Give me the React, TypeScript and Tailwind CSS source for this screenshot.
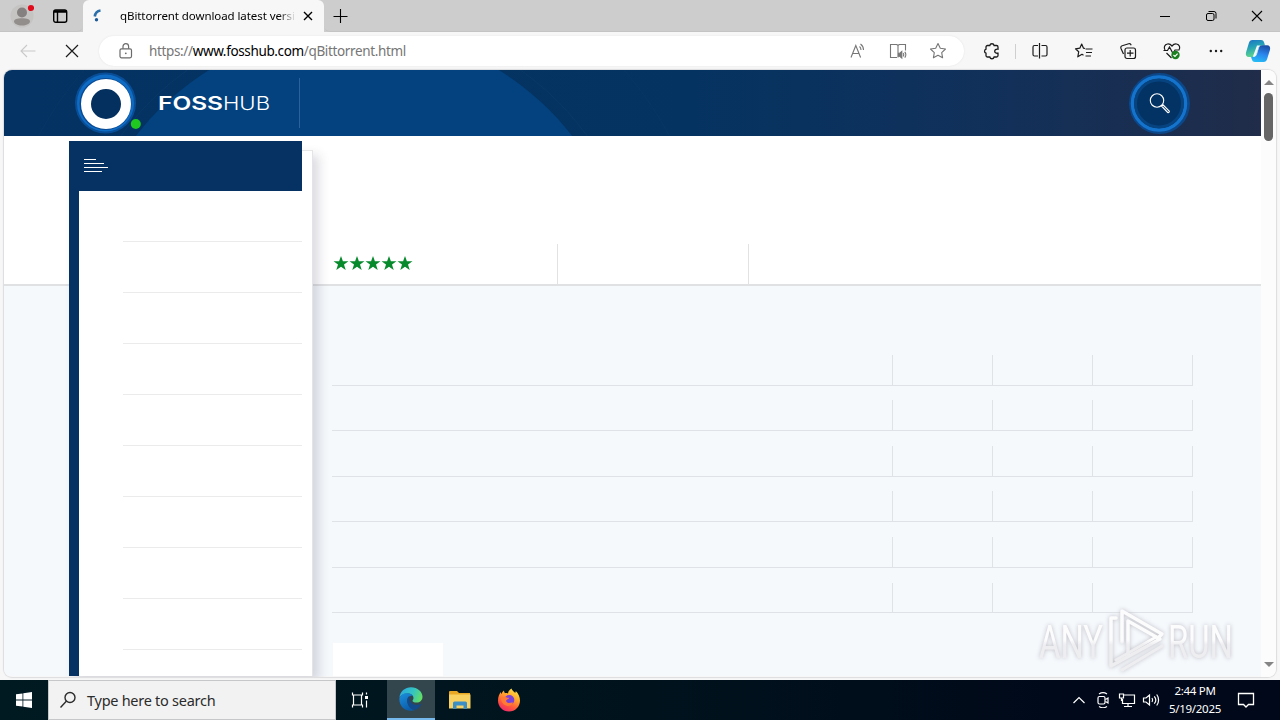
import React from 'react'

interface IconProps {
  size?: number
  className?: string
  stroke?: number
  children: React.ReactNode
}

function Icon({ size = 20, className = '', stroke = 1.1, children }: IconProps) {
  return (
    <svg
      width={size}
      height={size}
      viewBox={`0 0 ${size} ${size}`}
      fill="none"
      stroke="currentColor"
      strokeWidth={stroke}
      className={`shrink-0 ${className}`}
    >
      {children}
    </svg>
  )
}

const STAR = 'M10 2.5l2.3 4.8 5.2.7-3.8 3.6.9 5.2-4.6-2.5-4.6 2.5.9-5.2L2.500 8l5.200-.7z'

function TabStrip() {
  return (
    <div className="flex h-8 bg-[#cdcdcd] text-black">
      <div className="flex w-[83px] items-center rounded-br-md border-b border-[#c4c4c4]">
        <svg width="24" height="24" viewBox="0 0 24 24" className="ml-[10px] mt-px">
          <circle cx="12" cy="12" r="11.500" fill="#c6c4c3" />
          <circle cx="12" cy="8.500" r="5" fill="#858180" />
          <path d="M4 17.500c0-2.500 3-3.300 8-3.300s8 .8 8 3.300c0 2.200-3.500 4-8 4s-8-1.800-8-4z" fill="#918e8c" />
          <circle cx="21" cy="4" r="3.100" fill="#e00b1c" />
        </svg>
        <Icon size={16} stroke={1.4} className="ml-[18px]">
          <rect x="1.700" y="2" width="13" height="12.300" rx="2" />
          <path d="M2 3.500h12.500" strokeWidth="2.500" />
          <path d="M5.500 4v10" />
        </Icon>
      </div>
      <div className="flex w-[241px] items-center rounded-t-md bg-[#f7f7f7]">
        <svg width="14" height="14" viewBox="0 0 14 14" className="ml-[7px] shrink-0" fill="none">
          <path d="M10.500 1.500C7 2 5.200 4 4.800 7.500" stroke="#2a6faa" strokeWidth="2.600" />
          <circle cx="6.500" cy="10.700" r="1.700" fill="#1d5a96" />
        </svg>
        <div className="ml-4 w-[176px] whitespace-nowrap text-[11.5px] tracking-[-0.08px] [mask-image:linear-gradient(to_right,black_90%,transparent)]">
          qBittorrent download latest versi
        </div>
        <Icon size={12} stroke={1.4} className="ml-[6px]">
          <path d="M2 2l8 8M10 2l-8 8" />
        </Icon>
      </div>
      <div className="flex flex-1 items-center rounded-bl-md border-b border-[#c4c4c4]">
        <Icon size={16} stroke={1.1} className="ml-2">
          <path d="M8.500 1v14M1.500 8.500h14" />
        </Icon>
        <div className="ml-auto flex">
          <span className="flex w-[46px] justify-center">
            <Icon size={12} stroke={1}><path d="M1 6.500h10" /></Icon>
          </span>
          <span className="flex w-[46px] justify-center">
            <Icon size={12} stroke={1}>
              <rect x="1.500" y="3.500" width="7.500" height="7" rx="1.500" />
              <path d="M3.500 1.500h5.500a2 2 0 0 1 2 2v5" />
            </Icon>
          </span>
          <span className="flex w-[46px] justify-center">
            <Icon size={12} stroke={1.1}><path d="M1 1l10 10M11 1L1 11" /></Icon>
          </span>
        </div>
      </div>
    </div>
  )
}

function Copilot() {
  return (
    <svg width="26" height="24" viewBox="0 0 26 24">
      <defs>
        <linearGradient id="cpA" x1="0" y1="0" x2="0.3" y2="1">
          <stop offset="0" stopColor="#1d6fc4" />
          <stop offset="0.45" stopColor="#23a0b8" />
          <stop offset="1" stopColor="#5fd68a" />
        </linearGradient>
        <linearGradient id="cpB" x1="0.6" y1="0" x2="0.3" y2="1">
          <stop offset="0" stopColor="#1b4fa8" />
          <stop offset="0.5" stopColor="#2b86ee" />
          <stop offset="1" stopColor="#25bdf5" />
        </linearGradient>
      </defs>
      <path d="M7.500 1h8.500c2 0 2.700 1.200 3.300 3l.7 2.500h-3c-2 0-3 1-3.600 3l-1.700 5.500c-.6 2-1.700 3-3.700 3H4c-2.500 0-3.700-2-3-4.500L3.800 4.200C4.500 2 5.500 1 7.500 1z" fill="url(#cpA)" />
      <path d="M18.500 23H10c-2 0-2.700-1.200-3.300-3L6 17.800h2.500c2 0 3-1 3.600-3l1.700-5.500c.6-2 1.700-3 3.700-3H22c2.500 0 3.700 2 3 4.500l-2.800 9c-.7 2.200-1.700 3.200-3.700 3.200z" fill="url(#cpB)" />
      <path d="M12 6.500h3.500c-1.300.6-1.800 1.600-2.300 3.200l-1.700 5.300c-.4 1.300-1 2.200-2 2.700H7.800z" fill="#f3faff" />
    </svg>
  )
}

function Toolbar() {
  return (
    <div className="flex h-[38px] items-center bg-[#f7f7f7] text-[#1b1b1b]">
      <Icon className="ml-[18px] text-[#c9c9c9]">
        <path d="M17.500 10H3M9 4l-6 6 6 6" />
      </Icon>
      <Icon size={16} stroke={1.2} className="ml-[26px]">
        <path d="M2 2l12 12M14 2L2 14" />
      </Icon>
      <div className="ml-[19px] flex h-[30px] w-[865px] items-center rounded-full bg-white shadow-[0_0_2px_#e2e2e2]">
        <Icon size={16} stroke={1.2} className="ml-[19px] text-[#6b6b6b]">
          <rect x="2" y="5.800" width="11.500" height="9" rx="1.500" />
          <path d="M5 5.800V3.500a2.800 2.800 0 0 1 5.600 0v2.300" />
          <circle cx="7.800" cy="10.300" r="0.900" fill="currentColor" stroke="none" />
        </Icon>
        <div className="ml-[15px] flex-1 whitespace-nowrap text-[13.5px] tracking-[-0.36px] text-[#767676]">
          https://<span className="text-black">www.fosshub.com</span>/qBittorrent.html
        </div>
        <div className="flex pr-[6px] text-[#767676]">
          <span className="flex w-10 justify-center">
            <Icon>
              <path d="M3 16.500L7.800 4.500l4.800 12M4.700 12.500h6.200" />
              <path d="M11.500 5.500c1 .8 1.500 2 1.500 3.500M12.500 3c2 1.500 3 3.500 3 6" />
            </Icon>
          </span>
          <span className="flex w-10 justify-center">
            <Icon>
              <path d="M10 4v12.500M9 16.500H2.500V3.500h6.300L10 4.500l1.200-1h6.300v6" />
              <path d="M10.500 12.200h1.300l2-1.700v6.500l-2-1.700h-1.300z" fill="currentColor" />
              <path d="M15.200 12c.7 1 .7 2.500 0 3.500M16.800 10.800c1.300 1.800 1.300 4 0 5.800" />
            </Icon>
          </span>
          <span className="flex w-10 justify-center">
            <Icon><path d={STAR} strokeLinejoin="round" /></Icon>
          </span>
        </div>
      </div>
      <span className="ml-[6px] flex w-11 justify-center">
        <Icon stroke={1.3}>
          <path d="M5.500 4.500h2.300a2.200 2.200 0 0 1 4.300 0h2.400a1.500 1.500 0 0 1 1.500 1.500v2.200c-2.200-.3-3.300.7-3.300 2s1.100 2.300 3.300 2v2.300a1.500 1.500 0 0 1-1.500 1.500h-2.400a2.200 2.200 0 0 1-4.300 0H5.500A1.500 1.500 0 0 1 4 14.500v-2.300a2.100 2.100 0 0 1 0-4V6a1.500 1.500 0 0 1 1.500-1.500z" />
        </Icon>
      </span>
      <span className="ml-px mr-[2px] h-[15px] w-px bg-[#cfcfcf]" />
      <span className="flex w-11 justify-center">
        <Icon stroke={1.2}>
          <path d="M8 4.500H4.500A1.500 1.500 0 0 0 3 6v7.500A1.500 1.500 0 0 0 4.500 15H8M11.500 4.500h4A1.500 1.500 0 0 1 17 6v7.500a1.500 1.500 0 0 1-1.500 1.500h-4M9.500 2v15.500" />
        </Icon>
      </span>
      <span className="flex w-11 justify-center">
        <Icon stroke={1.2}>
          <path d="M11 7.500L9.500 7.200 7.700 3 5.800 7.200l-4.300.6 3.200 3-.9 5 4.200-2.500 1.500.9M11.500 8h7M12 11.500h6M11.500 15h5.500" strokeLinejoin="round" />
        </Icon>
      </span>
      <span className="flex w-11 justify-center">
        <Icon stroke={1.2}>
          <rect x="7" y="7" width="10.500" height="10.500" rx="2" />
          <path d="M12.200 9v6.500M9 12.200h6.500M5.500 13L3 7.500c-.5-1.400 0-2.300 1.200-2.700l6.500-2c1.300-.4 2 0 2.500 1.500" />
        </Icon>
      </span>
      <span className="flex w-11 justify-center">
        <Icon stroke={1.2}>
          <path d="M3 9C1.500 6.500 2.500 3.500 5.500 3c2-.3 3.500.8 4.500 2 1-1.200 2.500-2.300 4.500-2 3 .5 4 3.500 2.500 6M1.500 9.500h4L7.500 6l3.500 6.500 2-3.500h4.500M4.500 12l5 5" />
          <circle cx="13.500" cy="14" r="4.200" fill="#1a7f1f" stroke="none" />
          <path d="M11.500 14l1.500 1.400 2.600-2.700" stroke="#fff" />
        </Icon>
      </span>
      <span className="flex w-11 justify-center">
        <Icon>
          <g fill="currentColor" stroke="none">
            <circle cx="4.800" cy="10" r="1.200" />
            <circle cx="10" cy="10" r="1.200" />
            <circle cx="15.200" cy="10" r="1.200" />
          </g>
        </Icon>
      </span>
      <span className="flex w-10 justify-center"><Copilot /></span>
    </div>
  )
}

function SiteHeader() {
  return (
    <header className="relative h-[66px] overflow-hidden bg-[linear-gradient(to_right,#043363_0%,#053361_55%,#123059_80%,#202c49_100%)]">
      <svg className="absolute inset-0" width="1257" height="66" fill="none">
        <circle cx="350" cy="235" r="358" stroke="#0b3a68" strokeWidth="1" opacity="0.5" />
        <circle cx="350" cy="235" r="288" stroke="#093967" strokeWidth="1" />
        <circle cx="350" cy="235" r="276" fill="#03427f" />
      </svg>
      <div className="relative flex h-full items-center">
        <svg className="ml-[70px]" width="68" height="66" viewBox="0 0 68 66">
          <circle cx="31.500" cy="33" r="30.500" fill="#0b57a8" opacity="0.75" />
          <circle cx="31.500" cy="33" r="28.500" fill="#0f6cc4" />
          <circle cx="31.500" cy="34" r="26" fill="#0a4a92" />
          <circle cx="32" cy="34" r="20" stroke="#fff" strokeWidth="10" fill="#04305f" />
          <circle cx="61.800" cy="54" r="5" fill="#1fc91f" />
        </svg>
        <svg className="ml-4" width="112" height="24" viewBox="0 0 112 24" fill="#fff">
          <text x="0" y="18.500" fontFamily="Inter" fontWeight="600" fontSize="18.500" textLength="65" lengthAdjust="spacingAndGlyphs">FOSS</text>
          <text x="65" y="18.500" fontFamily="Inter" fontWeight="300" fontSize="18.500" textLength="47" lengthAdjust="spacingAndGlyphs">HUB</text>
        </svg>
        <span className="ml-[29px] h-[50px] w-px bg-[#2c629b]" />
        <svg className="ml-auto mr-[69px]" width="64" height="66" viewBox="0 0 64 66" fill="none">
          <circle cx="31.500" cy="33.500" r="30.500" fill="#094d97" opacity="0.8" />
          <circle cx="31" cy="33.500" r="26.500" fill="#033364" stroke="#1474cd" strokeWidth="3.500" />
          <circle cx="31" cy="33.500" r="23.500" stroke="#07437f" strokeWidth="3" />
          <g stroke="#fff" strokeWidth="1.100">
            <circle cx="29" cy="30.500" r="6.700" />
            <path d="M33.500 36l1.500-1.200 6.200 6.200c.5 1.200-.6 2-1.500 1.500z" />
          </g>
        </svg>
      </div>
    </header>
  )
}

const MENU_ROWS = Array.from({ length: 10 }, (_, i) => i)
const TABLE_ROWS = [
  'h-[31px]',
  'mt-[14px] h-[31px]',
  'mt-[15px] h-[31px]',
  'mt-[14px] h-[31px]',
  'mt-[15px] h-[31px]',
  'mt-[15px] h-[30px]',
]

function Sidebar() {
  return (
    <aside className="ml-[65px] mt-[14px] w-[244px] shrink-0 border-l-10 border-r border-t border-l-[#053262] border-r-[#e4e4e8] border-t-[#e6e6e8] bg-white shadow-[6px_5px_10px_rgba(50,40,80,0.17)]">
      <div className="-ml-[10px] -mt-[10px] h-[50px] w-[233px] bg-[#053262] pl-[15px] pt-[18px]">
        <svg width="24" height="14" stroke="#fff" strokeWidth="1">
          <path d="M0 .5h12M0 4.500h20M0 8.500h24M0 12.500h18" />
        </svg>
      </div>
      {MENU_ROWS.map((row) => (
        <div key={row} className="ml-11 mr-[10px] h-[51px] border-b border-[#ebebeb]" />
      ))}
    </aside>
  )
}

function Page() {
  return (
    <div className="flex h-[540px] bg-[linear-gradient(#fff_148px,#e0e1e3_148px,#e0e1e3_150px,#f5f9fc_150px)]">
      <Sidebar />
      <main className="ml-[19px] w-[861px]">
        <div className="flex h-[148px] items-end">
          <div className="flex h-10 w-[226px] border-r border-[#e2e2e2] pl-px pt-[12px]">
            {[0, 1, 2, 3, 4].map((star) => (
              <svg key={star} width="16" height="15" viewBox="0 0 16 15" fill="#078a2b">
                <path d="M8 0l1.900 5.200h5.600l-4.500 3.400 1.700 5.500L8 10.800l-4.700 3.300L5 8.600.5 5.200h5.600z" />
              </svg>
            ))}
          </div>
          <div className="h-10 w-[191px] border-r border-[#e2e2e2]" />
        </div>
        <div className="mt-[71px]">
          {TABLE_ROWS.map((spacing, row) => (
            <div key={row} className={`grid grid-cols-[561px_100px_100px_100px] border-b border-[#dfe3e7] ${spacing}`}>
              {[0, 1, 2, 3].map((cell) => (
                <div key={cell} className="border-r border-[#dfe3e7]" />
              ))}
            </div>
          ))}
        </div>
        <div className="ml-px mt-[30px] h-[33px] w-[110px] bg-white" />
      </main>
    </div>
  )
}

function Scrollbar() {
  return (
    <div className="flex w-[15px] flex-col items-center justify-between bg-[#fcfcfc] pt-[10px] pb-[10px]">
      <div className="flex flex-col items-center">
        <span className="h-0 w-0 border-x-[5px] border-b-[5px] border-x-transparent border-b-[#858585]" />
        <span className="mt-2 h-12 w-[9px] rounded-full bg-[#666]" />
      </div>
      <span className="h-0 w-0 border-x-[5px] border-t-[5px] border-x-transparent border-t-[#858585]" />
    </div>
  )
}

function Watermark() {
  return (
    <svg className="absolute left-[1030px] top-[602px] [filter:drop-shadow(0_0_2px_#bdbbc4)]" width="230" height="76" viewBox="0 0 230 76" fill="url(#wmFill)">
      <defs>
        <linearGradient id="wmFill" gradientUnits="userSpaceOnUse" x1="0" y1="8" x2="0" y2="68">
          <stop offset="0.5" stopColor="#fcfcfd" />
          <stop offset="0.58" stopColor="#eeeef1" />
        </linearGradient>
      </defs>
      <text x="9" y="56" fontFamily="Roboto" fontSize="46" fontWeight="400" textLength="64" lengthAdjust="spacingAndGlyphs">ANY</text>
      <text x="138" y="56" fontFamily="Roboto" fontSize="46" fontWeight="400" textLength="65" lengthAdjust="spacingAndGlyphs">RUN</text>
      <g fill="none" stroke="url(#wmFill)" strokeLinejoin="round" strokeLinecap="round">
        <path d="M92 40V9l40 23-4 4-30-17v34" strokeWidth="3.500" />
        <path d="M86 16h-5v48l49-27" strokeWidth="3.500" />
        <path d="M92 68l40-24M86 58l40-23" strokeWidth="3" />
      </g>
    </svg>
  )
}

function EdgeLogo() {
  return (
    <svg width="24" height="24" viewBox="0 0 24 24">
      <defs>
        <linearGradient id="edTop" x1="0" y1="0.3" x2="1" y2="0.6">
          <stop offset="0" stopColor="#2aa9e0" />
          <stop offset="0.55" stopColor="#35c5c0" />
          <stop offset="1" stopColor="#65df62" />
        </linearGradient>
        <linearGradient id="edLow" x1="0" y1="0" x2="0.5" y2="1">
          <stop offset="0" stopColor="#1b90dd" />
          <stop offset="1" stopColor="#0b5dab" />
        </linearGradient>
      </defs>
      <path d="M.5 10.500C1.200 4.500 6 .3 12 .3c6.500 0 11.500 4.500 11.500 9.500 0 3.500-2.600 5.800-6 5.800-2.500 0-4-.8-4-1.800 0-.8 1-1 1-2.800C14.500 8.500 12 6.500 8.500 6.500 4.500 6.500 1.500 8.500.5 10.500z" fill="url(#edTop)" />
      <path d="M.4 11.500C1.200 8.300 4.500 6.200 8.500 6.300c2.500.1 4.500 1 5.400 2.500-3-.7-5.600 1.800-5.600 5 0 4.500 3.200 8.600 7.500 9.300C8 25.500 0 20.500.4 11.500z" fill="url(#edLow)" />
      <path d="M8.200 13.500c0-2 .8-3.600 2.300-4.500-.8 3.500 1.500 8.500 6.500 9 2.100.2 3.500-.5 4.500-.9.600-.2.900.2.600.7-1.500 2.600-4 4.700-6.600 5.300-4-.7-7.300-5-7.300-9.600z" fill="#134a8b" />
    </svg>
  )
}

function FirefoxLogo() {
  return (
    <svg width="24" height="24" viewBox="0 0 24 24">
      <defs>
        <linearGradient id="ffx" x1="0.8" y1="0" x2="0.3" y2="1">
          <stop offset="0" stopColor="#ffe44a" />
          <stop offset="0.35" stopColor="#ffac2c" />
          <stop offset="0.7" stopColor="#ff5a3a" />
          <stop offset="1" stopColor="#f0286c" />
        </linearGradient>
      </defs>
      <path d="M14.500.5c.5 2 2 2.800 3.500 4.300.6-.2.8-1 .7-1.800 2.800 2.500 4.300 6 4.300 9.500 0 6.200-4.800 11-11 11s-11-4.800-11-11c0-3.500 1.200-6.300 2.800-8.500.1 1 .3 1.500.7 2C5 4.500 5.800 3.500 7 2.500c0 1 .3 2 1 2.700 1-.2 2 0 3 .3.2-2 1.500-4 3.500-5z" fill="url(#ffx)" />
      <circle cx="12.300" cy="12" r="5" fill="#7a42d8" />
      <path d="M4 9.500c2-.8 3.500-1 5-.3.800.3 2 .5 3.200.6-.1 1.200-2 1.500-2.700 2.200-.7.700-.2 2.500 1.700 3 2 .5 3-.8 4.800-.3-1 2.300-3.200 3.500-5.500 3.200C6.500 17.500 4 14 4 9.500z" fill="#ff7a35" />
    </svg>
  )
}

function ExplorerLogo() {
  return (
    <svg width="22" height="20" viewBox="0 0 22 20">
      <path d="M0 2a1 1 0 0 1 1-1h7l2 2h11v5H0z" fill="#e9a824" />
      <path d="M0 4.500h21.500v14H0z" fill="#f9d160" />
      <path d="M4 19v-6a1.500 1.500 0 0 1 1.500-1.500h11A1.500 1.500 0 0 1 18 13v6h-3.500v-3.500h-7V19z" fill="#3b8fc4" />
    </svg>
  )
}

function Taskbar() {
  return (
    <div className="flex h-10 items-center bg-[linear-gradient(to_right,#001a22,#00131d_50%,#000819_85%)] text-white">
      <div className="flex w-12 justify-center">
        <svg width="16" height="16" viewBox="0 0 16 16" fill="#fff">
          <path d="M0 2.300l6.500-.9v6.200H0zM7.300 1.300L16 0v7.600H7.300zM0 8.400h6.500v6.200L0 13.700zM7.300 8.400H16V16l-8.700-1.300z" />
        </svg>
      </div>
      <div className="flex h-10 w-[288px] items-center border border-[#c5c7c9] bg-[#f2f2f2] text-[#2b2b2b]">
        <Icon size={18} stroke={1.4} className="ml-[10px]">
          <circle cx="11" cy="6.500" r="5" />
          <path d="M7.500 10L1.500 16.500" />
        </Icon>
        <span className="ml-[10px] mt-px whitespace-nowrap text-[14.5px] tracking-[-0.27px]">Type here to search</span>
      </div>
      <div className="flex w-[51px] justify-center pr-[3px]">
        <Icon size={18} stroke={1.2}>
          <path d="M1.500 1.500v2.500h10V1.500M1.500 16.500V14h10v2.500M2.500 4v10M10.500 4v10M15.500 1.500v2M15.500 9.500v7" />
          <path d="M14 5h3v3h-3z" fill="currentColor" stroke="none" />
        </Icon>
      </div>
      <div className="flex h-10 w-12 items-center justify-center border-b-2 border-[#76b9ed] bg-[#33464e]"><EdgeLogo /></div>
      <div className="flex w-[50px] justify-center"><ExplorerLogo /></div>
      <div className="flex w-12 justify-center"><FirefoxLogo /></div>
      <div className="ml-auto flex items-center">
        <Icon size={12} stroke={1.2}><path d="M.5 9L6 3.500 11.500 9" /></Icon>
        <Icon size={16} stroke={1.2} className="ml-[10px]">
          <rect x="3" y="4.500" width="7" height="7.500" rx="1.500" />
          <path d="M10.500 7.500L13 6v5l-2.500-1.500M4 2c2.500-1.600 5.500-1.600 8 0M4 14.500c2.500 1.600 5.500 1.600 8 0" />
        </Icon>
        <Icon size={18} stroke={1.2} className="ml-[7px]">
          <path d="M5.500 4h11v8.500H4.500V8M1.500 3h4v4h-4zM3.500 7v3M10 12.500v3M6 15.500h8" />
        </Icon>
        <Icon size={18} stroke={1.2} className="ml-[6px]">
          <path d="M1.500 7v4h2.500l3.500 3V4L4 7zM10 7c.8 1.200.8 2.800 0 4M12.300 5.300c1.800 2.200 1.800 5.200 0 7.400M14.700 3.500c2.500 3.200 2.500 7.800 0 11" />
        </Icon>
        <div className="ml-[7px] w-[56px] whitespace-nowrap text-center text-[11.5px] leading-[18px] tracking-[-0.3px]">
          <div>2:44 PM</div>
          <div>5/19/2025</div>
        </div>
        <Icon size={18} stroke={1.3} className="ml-[14px] mr-[25px]">
          <path d="M1.500 2.500h15v11h-5L9 16l-2.500-2.500h-5z" />
        </Icon>
      </div>
    </div>
  )
}

export default function App() {
  return (
    <div className="relative flex h-[720px] w-[1280px] flex-col overflow-hidden bg-[#f7f7f7] font-['Noto_Sans',sans-serif]">
      <TabStrip />
      <Toolbar />
      <div className="mx-1 mb-[3px] flex h-[607px] overflow-hidden rounded-lg shadow-[0_0_1px_1px_#dcdcdf]">
        <div className="w-[1257px] shrink-0 overflow-hidden">
          <SiteHeader />
          <Page />
        </div>
        <Scrollbar />
      </div>
      <Taskbar />
      <Watermark />
    </div>
  )
}
